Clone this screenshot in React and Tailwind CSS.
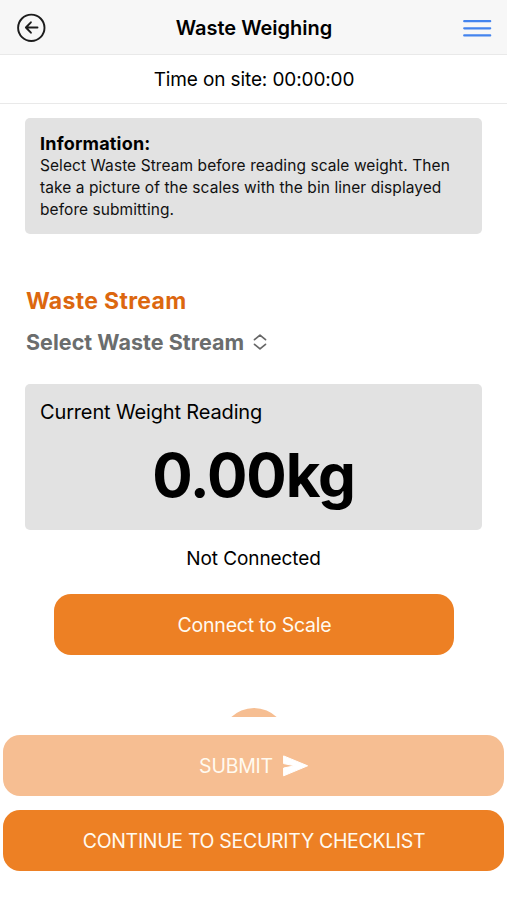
const buttonBase =
  'flex items-center justify-center w-full h-[61px] pl-px text-[#fffaf0] text-[19.5px] leading-6'

const BackIcon = () => (
  <svg width="30" height="30" viewBox="0 0 30 30" fill="none" stroke="#1c1c1c" strokeWidth="1.9" strokeLinecap="round" strokeLinejoin="round">
    <circle cx="15.3" cy="14.8" r="13.2" />
    <path d="M14.9 9.3L9.9 14.5L14.9 19.7M10.4 14.5H21.5" />
  </svg>
)

const MenuIcon = () => (
  <svg width="29" height="18" viewBox="0 0 29 18" stroke="#4484ee" strokeWidth="2.2" strokeLinecap="round">
    <path d="M1.2 2.2H27.2M1.2 9.3H27.2M1.2 16.4H27.2" />
  </svg>
)

const SelectIcon = () => (
  <svg width="14" height="16" viewBox="0 0 14 16" fill="none" stroke="#666" strokeWidth="1.7" strokeLinecap="round" strokeLinejoin="round">
    <path d="M1.5 5.7L7 1.2L12.5 5.7M1.5 10.3L7 14.8L12.5 10.3" />
  </svg>
)

const SendIcon = () => (
  <svg width="26" height="22" viewBox="0 0 26 22" fill="#fff" stroke="#fff" strokeWidth="1" strokeLinejoin="round">
    <path d="M0.6 0.9L24.6 10.8L0.6 20.8V13L12 10.8L0.6 8.6Z" />
  </svg>
)

export default function App() {
  return (
    <div className="flex flex-col w-full h-[900px] overflow-hidden bg-white text-black font-['Inter',sans-serif]">
      <header className="flex items-center justify-between h-[55px] pt-0.5 pl-4 pr-[15px] bg-[#f7f7f7] border-b border-[#e9e9e9]">
        <BackIcon />
        <h1 className="pr-px text-[20px] font-semibold">Waste Weighing</h1>
        <MenuIcon />
      </header>
      <div className="flex items-center justify-center h-[49px] pt-[3px] pl-px border-b border-[#e9e9e9] text-[19px] tracking-[-0.12px]">
        Time on site: 00:00:00
      </div>

      <main className="flex flex-col h-[613px] px-[25px] pt-[14px] overflow-hidden">
        <div className="h-[116px] shrink-0 px-[15px] pt-[15px] rounded-[5px] bg-[#e2e2e2]">
          <h2 className="text-[18px] leading-[22px] tracking-[0.2px] font-bold">Information:</h2>
          <p className="text-[15.5px] leading-[22px] tracking-[0.07px] whitespace-nowrap text-[#111]">
            Select Waste Stream before reading scale weight. Then
            <br />
            take a picture of the scales with the bin liner displayed
            <br />
            before submitting.
          </p>
        </div>

        <h2 className="mt-[52px] pl-px text-[23px] leading-[30px] tracking-[0.32px] font-bold text-[#dc670f]">Waste Stream</h2>
        <button className="flex items-center gap-[9px] mt-[11px] pl-px text-[21.5px] leading-[30px] tracking-[0.03px] font-bold text-[#6b6d6d]">
          Select Waste Stream
          <SelectIcon />
        </button>

        <div className="h-[146px] shrink-0 mt-[27px] px-[15px] pt-[14px] rounded-[5px] bg-[#e2e2e2]">
          <div className="text-[20px] leading-7 tracking-[-0.15px]">Current Weight Reading</div>
          <div className="mt-[13px] text-center text-[60px] leading-[72px] tracking-[-1.1px] font-bold">0.00kg</div>
        </div>
        <div className="mt-[14px] pt-px text-center text-[19px] leading-[27px] tracking-[-0.08px]">Not Connected</div>
        <div className="mt-[22px] pl-[29px] pr-[28px]">
          <button className={`${buttonBase} tracking-[-0.24px] rounded-[17px] bg-[#ed8024]`}>Connect to Scale</button>
        </div>
        <div className="self-center shrink-0 size-[66px] mt-[53px] rounded-full bg-[#f6be92]" />
      </main>

      <footer className="flex flex-col gap-[14px] px-[3px] pt-[18px]">
        <button className={`${buttonBase} gap-[10px] tracking-[-0.24px] rounded-[17px] bg-[#f6be92]`}>
          SUBMIT
          <SendIcon />
        </button>
        <button className={`${buttonBase} tracking-[-0.32px] rounded-[17px] bg-[#ed8024]`}>CONTINUE TO SECURITY CHECKLIST</button>
      </footer>
    </div>
  )
}
